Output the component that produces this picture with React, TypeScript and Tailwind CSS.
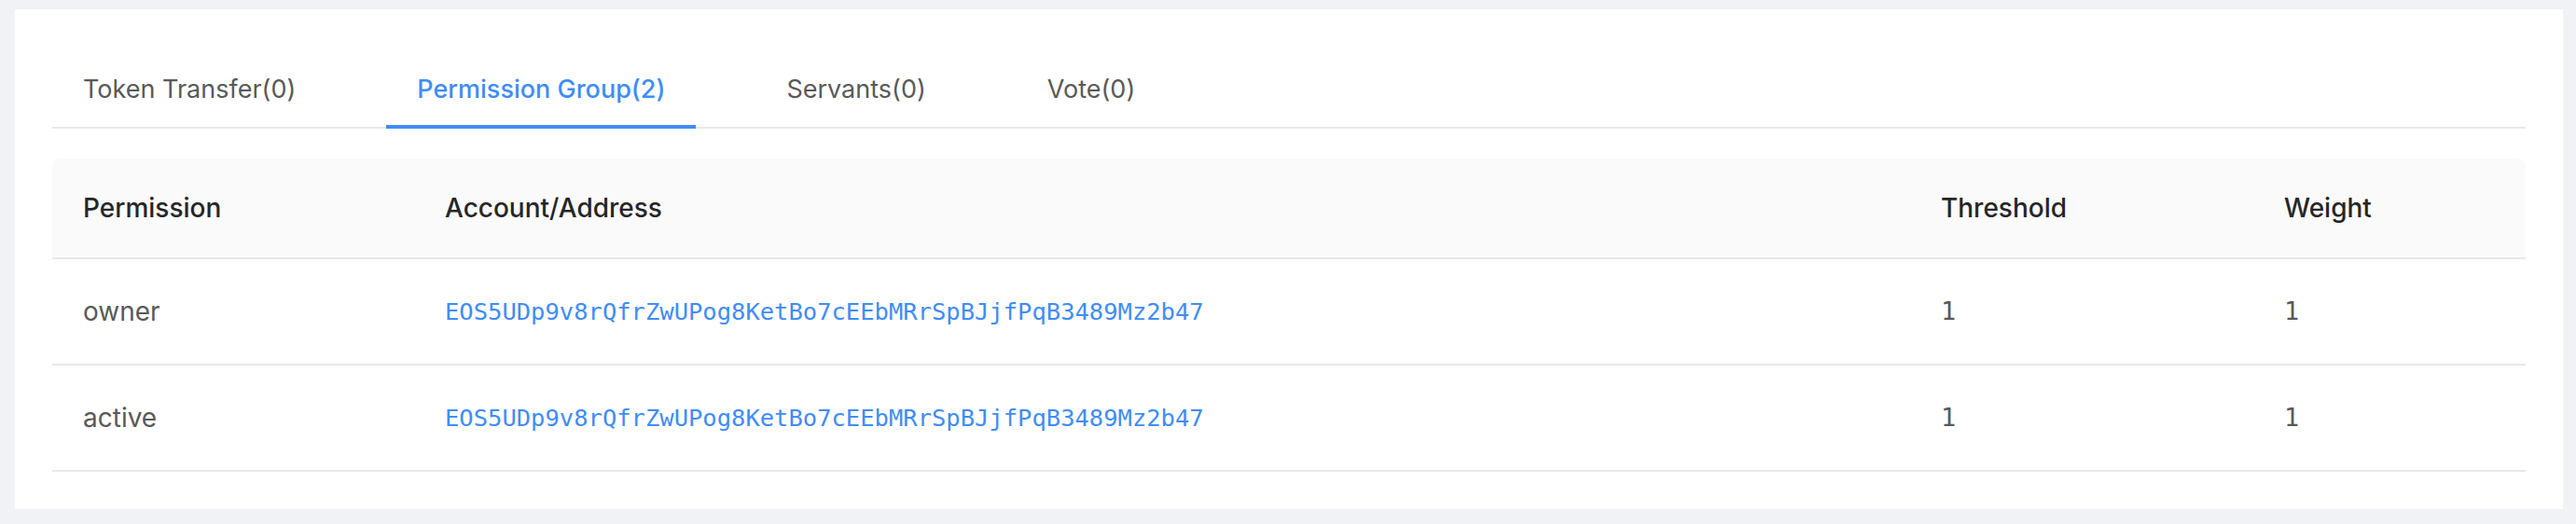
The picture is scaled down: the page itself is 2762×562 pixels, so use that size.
import React from 'react';

const tabs = [
  { label: 'Token Transfer(0)', active: false },
  { label: 'Permission Group(2)', active: true },
  { label: 'Servants(0)', active: false },
  { label: 'Vote(0)', active: false },
];

const rows = [
  { permission: 'owner', address: 'EOS5UDp9v8rQfrZwUPog8KetBo7cEEbMRrSpBJjfPqB3489Mz2b47', threshold: 1, weight: 1 },
  { permission: 'active', address: 'EOS5UDp9v8rQfrZwUPog8KetBo7cEEbMRrSpBJjfPqB3489Mz2b47', threshold: 1, weight: 1 },
];

const cols = 'grid grid-cols-[388px_1604px_368px_1fr]';

const App: React.FC = () => {
  return (
    <div className="min-h-[562px] bg-[#f0f2f5] pt-[10px] pl-[16px] pr-[14px] pb-[16px] font-['Inter','Liberation_Sans',sans-serif]">
      <div className="bg-white px-[40px] pt-[38px] pb-[40px]">
        <div className="flex border-b-2 border-[#e8e8e8]">
          {tabs.map((t) => (
            <div
              key={t.label}
              className={`-mb-[2px] mr-[64px] px-[33px] pt-[27px] pb-[17px] text-[27px] leading-[42px] border-b-4 ${
                t.active ? 'border-[#408cf6] text-[#408cf6] font-medium' : 'border-transparent text-[#595959]'
              }`}
            >
              {t.label}
            </div>
          ))}
        </div>

        <div className="mt-[32px]">
          <div className={`${cols} h-[108px] items-center rounded-t-[8px] bg-[#fafafa] border-b-2 border-[#e8e8e8] text-[28px] text-[#262626] font-medium`}>
            <div className="px-[33px]">Permission</div>
            <div className="px-[33px]">Account/Address</div>
            <div className="px-[33px]">Threshold</div>
            <div className="px-[33px]">Weight</div>
          </div>
          {rows.map((r) => (
            <div key={r.permission} className={`${cols} h-[114px] items-center border-b-2 border-[#e8e8e8] text-[28px] text-[#595959]`}>
              <div className="px-[33px]">{r.permission}</div>
              <div className="px-[33px] font-['DejaVu_Sans_Mono',monospace] text-[25.5px] text-[#408cf6]">{r.address}</div>
              <div className="px-[33px] font-['DejaVu_Sans_Mono',monospace] text-[27px]">{r.threshold}</div>
              <div className="px-[33px] font-['DejaVu_Sans_Mono',monospace] text-[27px]">{r.weight}</div>
            </div>
          ))}
        </div>
      </div>
    </div>
  );
};

export default App;
